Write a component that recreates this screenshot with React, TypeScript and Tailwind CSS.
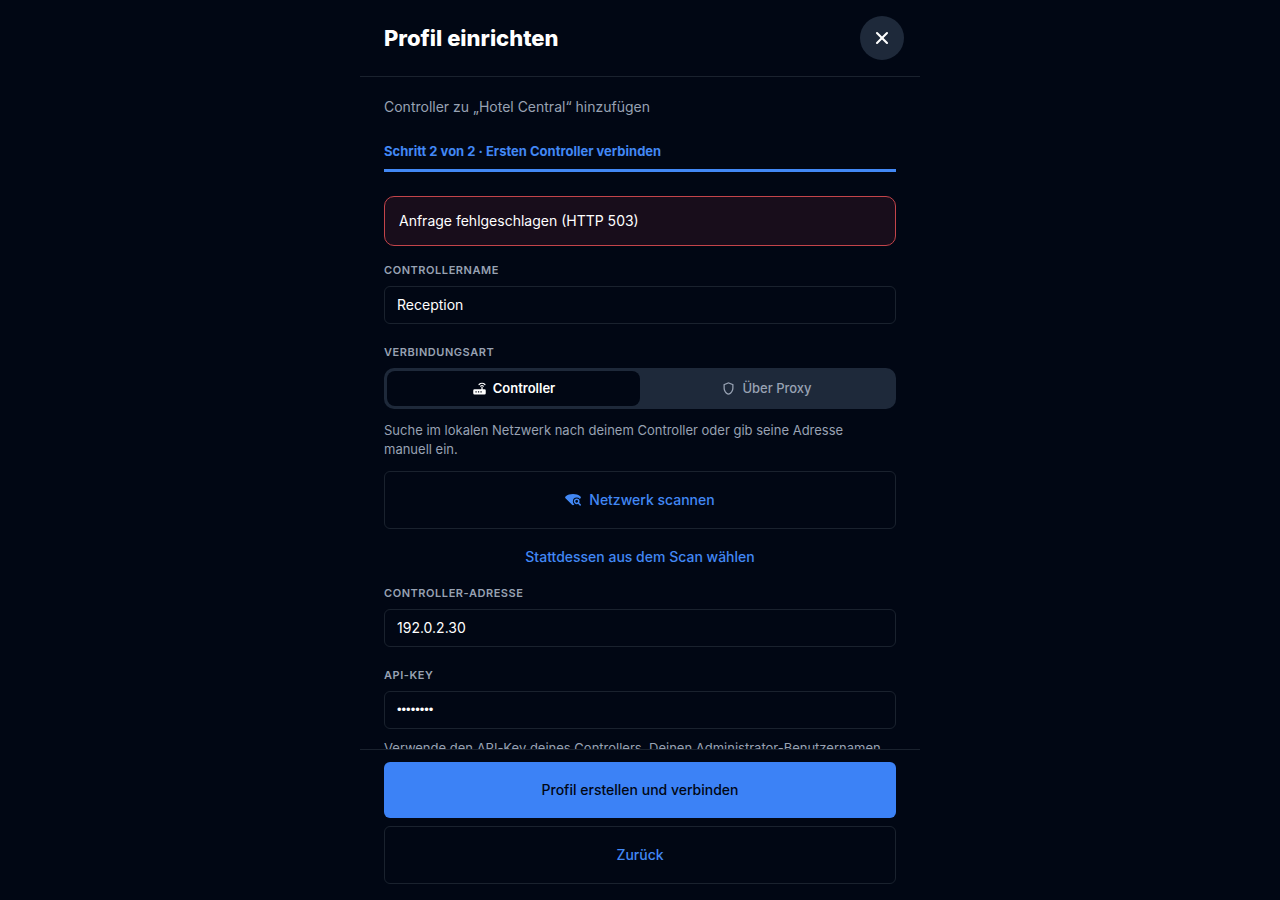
import { useState } from "react";
import type { ReactNode } from "react";
import { X } from "lucide-react";
import { MdOutlineShield } from "react-icons/md";

type Mode = "controller" | "proxy";

const OUTLINE_BUTTON =
  "flex w-full items-center justify-center gap-2 rounded-md border border-[#1a222e] px-4 py-[18px] text-sm leading-5 font-medium text-[#4288f5]";

function RouterIcon({ className }: { className?: string }) {
  return (
    <svg viewBox="0 0 24 24" className={className} aria-hidden="true">
      <path
        fill="currentColor"
        fillRule="evenodd"
        d="M4 13h11V9.500h2V13h3a2 2 0 0 1 2 2v4.500a2 2 0 0 1-2 2H4a2 2 0 0 1-2-2V15a2 2 0 0 1 2-2zM5.500 16.200v2.200h2v-2.200zM9.500 16.200v2.200h2v-2.200zM13.500 16.200v2.200h2v-2.200z"
      />
      <path
        d="M11.300 5.600a6.800 6.800 0 0 1 9.400 0M13.800 8.300a3.200 3.200 0 0 1 4.400 0"
        fill="none"
        stroke="currentColor"
        strokeWidth="1.9"
        strokeLinecap="round"
      />
    </svg>
  );
}

function WifiSearchIcon({ className }: { className?: string }) {
  return (
    <svg viewBox="0 0 24 24" className={className} aria-hidden="true">
      <mask id="wifi-search-cutout">
        <rect width="24" height="24" fill="white" />
        <circle cx="17.5" cy="14" r="5.6" fill="black" />
        <path d="M17.5 14 24 20v4h-9.500z" fill="black" />
      </mask>
      <path
        mask="url(#wifi-search-cutout)"
        fill="currentColor"
        d="M12 3c4.200 0 8.100 1.200 11.200 3.600.8.700.9 1.900.1 2.700l-9.900 9.900c-.8.800-2 .8-2.800 0L.7 9.300c-.8-.8-.7-2 .1-2.700C3.900 4.200 7.800 3 12 3z"
      />
      <circle cx="17.5" cy="14" r="3.2" fill="none" stroke="currentColor" strokeWidth="2.200" />
      <path d="m20 16.500 2.800 2.800" stroke="currentColor" strokeWidth="2.200" strokeLinecap="round" />
    </svg>
  );
}

function Field({
  id,
  label,
  type = "text",
  value,
  onChange,
}: {
  id: string;
  label: string;
  type?: "text" | "password";
  value: string;
  onChange: (value: string) => void;
}) {
  return (
    <div className="flex flex-col gap-2">
      <label htmlFor={id} className="text-[11px] leading-4 font-semibold tracking-wider text-[#98a2b3] uppercase">
        {label}
      </label>
      <input
        id={id}
        type={type}
        value={value}
        onChange={(event) => onChange(event.target.value)}
        className={
          type === "password"
            ? "w-full rounded-md border border-[#1a222e] bg-transparent px-3 py-2 font-['Liberation_Sans',sans-serif] text-[13px] leading-5 text-white outline-none"
            : "w-full rounded-md border border-[#1a222e] bg-transparent px-3 py-2 text-sm leading-5 text-white outline-none"
        }
      />
    </div>
  );
}

function Segment({
  active,
  onClick,
  icon,
  children,
}: {
  active: boolean;
  onClick: () => void;
  icon: ReactNode;
  children: ReactNode;
}) {
  return (
    <button
      type="button"
      aria-pressed={active}
      onClick={onClick}
      className={
        active
          ? "flex flex-1 items-center justify-center gap-[6px] rounded-lg bg-[#010714] py-2 text-[13px] leading-[19px] font-semibold text-white"
          : "flex flex-1 items-center justify-center gap-[6px] rounded-lg py-2 text-[13px] leading-[19px] font-medium text-[#98a2b3]"
      }
    >
      {icon}
      {children}
    </button>
  );
}

export default function App() {
  const [name, setName] = useState("Reception");
  const [mode, setMode] = useState<Mode>("controller");
  const [address, setAddress] = useState("192.0.2.30");
  const [apiKey, setApiKey] = useState("geheim12");

  return (
    <div className="h-screen bg-[#010714] pb-1 font-['Inter',sans-serif]">
      <main className="mx-auto flex h-full w-full max-w-[560px] flex-col">
        <header className="flex items-center justify-between border-b border-[#1a222e] py-4 pr-4 pl-6">
          <h1 className="text-[22px] leading-7 font-extrabold text-white">Profil einrichten</h1>
          <button
            type="button"
            aria-label="Schließen"
            className="flex size-11 items-center justify-center rounded-full bg-[#1e293a] text-white"
          >
            <X className="size-5" strokeWidth={2.5} />
          </button>
        </header>

        <div className="min-h-0 flex-1 overflow-y-auto px-6 pt-5 [scrollbar-width:none]">
          <p className="text-sm leading-5 text-[#98a2b3]">Controller zu „Hotel Central“ hinzufügen</p>
          <p className="mt-6 border-b-[3px] border-[#4288f5] pb-2 text-[13px] leading-5 font-bold text-[#4288f5]">
            Schritt 2 von 2 · Ersten Controller verbinden
          </p>
          <div
            role="alert"
            className="mt-6 mb-4 rounded-[10px] border border-[#c3444a] bg-[#180d1b] px-[14px] py-[14px] text-sm leading-5 text-white"
          >
            Anfrage fehlgeschlagen (HTTP 503)
          </div>

          <Field id="name" label="Controllername" value={name} onChange={setName} />

          <fieldset className="mt-5">
            <legend className="mb-2 text-[11px] leading-4 font-semibold tracking-wider text-[#98a2b3] uppercase">
              Verbindungsart
            </legend>
            <div className="flex rounded-[10px] bg-[#1e293a] p-[3px]">
              <Segment
                active={mode === "controller"}
                onClick={() => setMode("controller")}
                icon={<RouterIcon className="size-[15px]" />}
              >
                Controller
              </Segment>
              <Segment
                active={mode === "proxy"}
                onClick={() => setMode("proxy")}
                icon={<MdOutlineShield className="size-[15px]" />}
              >
                Über Proxy
              </Segment>
            </div>
          </fieldset>

          <p className="my-3 pr-8 text-[13px] leading-[19px] text-[#98a2b3]">
            Suche im lokalen Netzwerk nach deinem Controller oder gib seine Adresse manuell ein.
          </p>
          <button type="button" className={OUTLINE_BUTTON}>
            <WifiSearchIcon className="size-4" />
            Netzwerk scannen
          </button>
          <button
            type="button"
            className="my-[18px] block w-full text-center text-sm leading-5 font-medium text-[#4288f5]"
          >
            Stattdessen aus dem Scan wählen
          </button>

          <div className="flex flex-col gap-5">
            <Field id="address" label="Controller-Adresse" value={address} onChange={setAddress} />
            <Field id="api-key" label="API-Key" type="password" value={apiKey} onChange={setApiKey} />
          </div>
          <p className="mt-[10px] text-[13px] leading-[19px] text-[#98a2b3]">
            Verwende den API-Key deines Controllers. Deinen Administrator-Benutzernamen
          </p>
        </div>

        <footer className="flex flex-col gap-2 border-t border-[#1a222e] px-6 py-3">
          <button
            type="button"
            className="w-full rounded-md bg-[#3c82f6] px-4 py-[18px] text-sm leading-5 font-medium text-[#010714]"
          >
            Profil erstellen und verbinden
          </button>
          <button type="button" className={OUTLINE_BUTTON}>
            Zurück
          </button>
        </footer>
      </main>
    </div>
  );
}
